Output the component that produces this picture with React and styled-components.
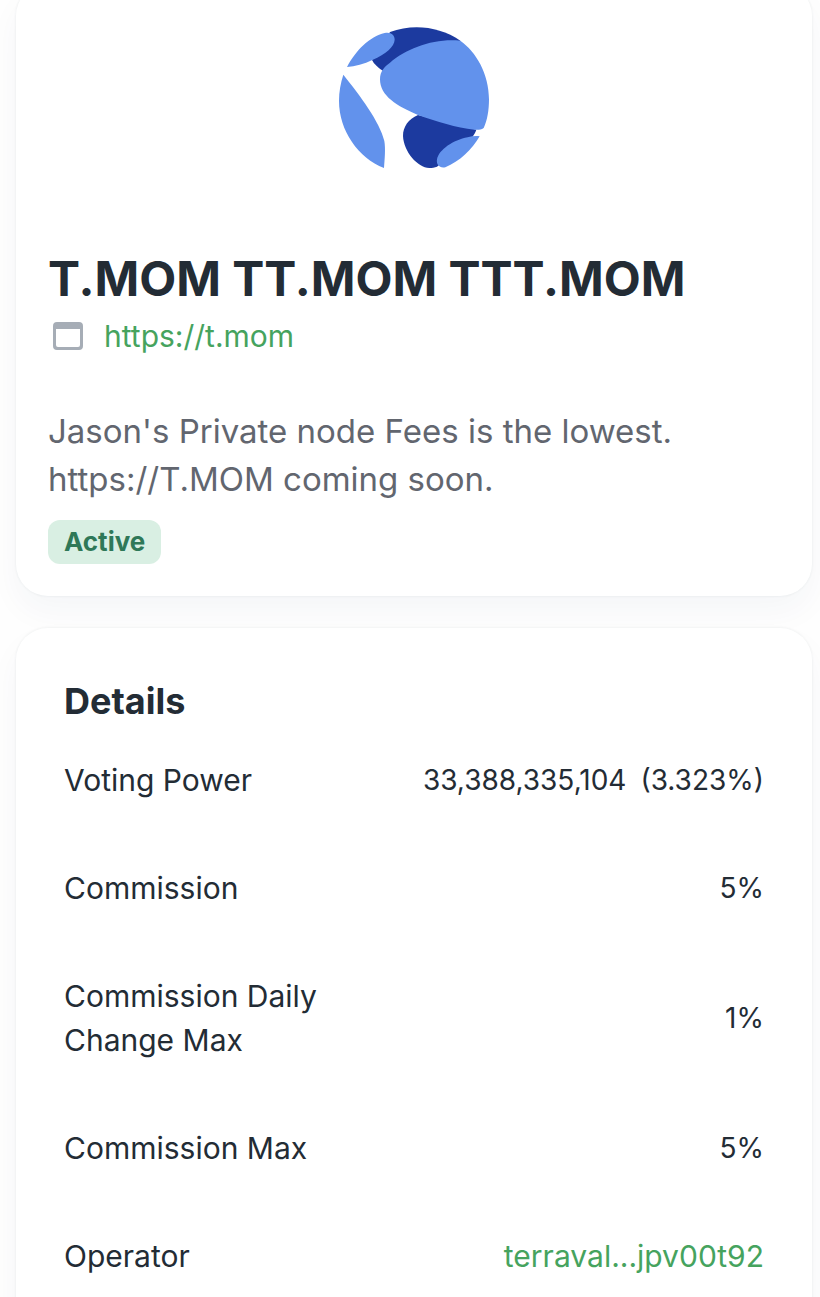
import styled, { createGlobalStyle } from 'styled-components';

const details = [
  { label: 'Voting Power', value: '33,388,335,104', share: '(3.323%)' },
  { label: 'Commission', value: '5%' },
  { label: 'Commission Daily Change Max', value: '1%' },
  { label: 'Commission Max', value: '5%' },
  { label: 'Operator', value: 'terraval...jpv00t92', href: '#operator' },
];

const App = () => {
  return (
    <>
      <GlobalStyle />
      <Page>
        <Profile>
          <Logo viewBox="27 36 450 426" role="img" aria-label="Terra">
            <path
              fill="#1c3a9f"
              d="M180 51 C250 25 330 35 391 77 L300 150 L158 167 C143 157 132 147 126 135 Z"
            />
            <path
              fill="#1c3a9f"
              d="M264 300 C235 313 219 335 219 363 C221 410 263 458 298 459 C306 459 314 457 321 455 L400 390 C420 375 434 361 439 344 Z"
            />
            <path
              fill="#6292ec"
              d="M51 156 C76 108 119 64 164 54 C183 50 194 60 194 74 C193 94 169 117 127 135 C103 147 75 155 51 156 Z"
            />
            <path
              fill="#6292ec"
              d="M391 77 C438 110 477 176 477 253 C477 286 472 316 461 339 C452 345 443 345 433 344 C379 338 320 320 264 300 C202 274 150 243 150 193 C150 168 164 155 180 143 C230 100 312 69 391 77 Z"
            />
            <path
              fill="#6292ec"
              d="M40 179 C89 240 150 321 163 378 C167 402 164 432 162 459 C85 429 27 347 27 258 C27 230 32 203 40 179 Z"
            />
            <path
              fill="#6292ec"
              d="M449 364 C427 403 388 440 346 457 C329 461 318 449 321 433 C327 404 370 375 413 367 C425 364 437 362 449 364 Z"
            />
          </Logo>
          <Title>T.MOM TT.MOM TTT.MOM</Title>
          <Website>
            <svg viewBox="0 0 30 28" aria-hidden="true">
              <path
                fill="#a6adb6"
                fillRule="evenodd"
                d="M4 0 H26 Q30 0 30 4 V24 Q30 28 26 28 H4 Q0 28 0 24 V4 Q0 0 4 0 Z M3 7 V23 Q3 25 5 25 H25 Q27 25 27 23 V7 Z"
              />
            </svg>
            <Link href="https://t.mom">https://t.mom</Link>
          </Website>
          <Description>
            Jason's Private node Fees is the lowest. https://T.MOM coming soon.
          </Description>
          <Status>Active</Status>
        </Profile>

        <Details>
          <Heading>Details</Heading>
          <List>
            {details.map(({ label, value, share, href }) => (
              <Row key={label}>
                <Label>{label}</Label>
                <Value $link={Boolean(href)}>
                  {href ? <Link href={href}>{value}</Link> : value}
                  {share && <Share>{share}</Share>}
                </Value>
              </Row>
            ))}
          </List>
        </Details>
      </Page>
    </>
  );
};

const GlobalStyle = createGlobalStyle`
  * {
    box-sizing: border-box;
  }

  body {
    margin: 0;
    background: #fefefe;
    color: #232c35;
    font-family: Inter, "Liberation Sans", sans-serif;
  }
`;

const Page = styled.main`
  display: flex;
  flex-direction: column;
  gap: 32px;
  margin-top: -16px;
  padding: 0 8px 0 16px;
`;

const Card = styled.section`
  background: white;
  border-radius: 32px;
  box-shadow: 0 0 2px 1px rgba(35, 44, 53, 0.04),
    0 16px 32px rgba(35, 50, 90, 0.04);
`;

const Profile = styled(Card)`
  display: flex;
  flex-direction: column;
  align-items: flex-start;
  padding: 43px 32px 32px;
`;

const Logo = styled.svg`
  align-self: center;
  width: 150px;
  height: 142px;
  margin-bottom: 80px;
`;

const Title = styled.h1`
  margin: 0 0 3px;
  font-size: 48px;
  font-weight: 700;
  line-height: 60px;
`;

const Website = styled.div`
  display: flex;
  align-items: center;
  gap: 21px;
  margin-bottom: 47px;
  padding-left: 5px;
  font-size: 30px;
  line-height: 48px;

  svg {
    width: 30px;
    height: 28px;
  }
`;

const Link = styled.a`
  color: #46a35e;
  text-decoration: none;
`;

const Description = styled.p`
  max-width: 680px;
  margin: 0 0 17px;
  color: #62666f;
  font-size: 33px;
  line-height: 48px;
`;

const Status = styled.span`
  padding: 0 16px;
  border-radius: 12px;
  background: #d9efe3;
  color: #2f7858;
  font-size: 26px;
  font-weight: 700;
  line-height: 44px;
`;

const Details = styled(Card)`
  padding: 48px;
`;

const Heading = styled.h2`
  margin: 0;
  font-size: 36px;
  font-weight: 700;
  line-height: 50px;
`;

const List = styled.dl`
  margin: 0;
`;

const Row = styled.div`
  display: flex;
  align-items: center;
  justify-content: space-between;
  padding: 32px 0;
  font-size: 30px;
  line-height: 44px;
`;

const Label = styled.dt`
  max-width: 280px;
`;

const Value = styled.dd`
  margin: 0;
  font-size: ${(props) => (props.$link ? '30px' : '28px')};
  text-align: right;
`;

const Share = styled.span`
  margin-left: 14px;
`;

export default App;
